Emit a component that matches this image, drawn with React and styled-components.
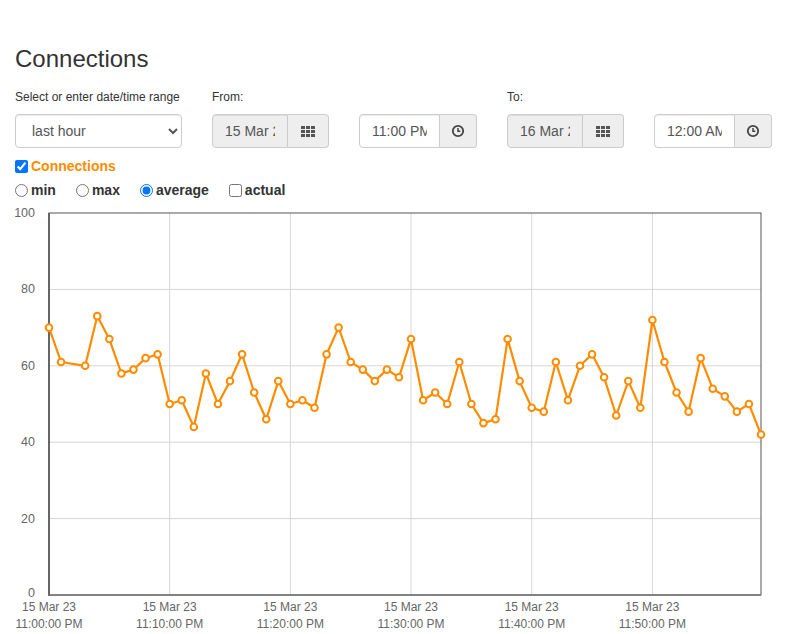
import React, { useState } from 'react'
import styled, { createGlobalStyle } from 'styled-components'

const GlobalStyle = createGlobalStyle`
  body {
    margin: 0;
    font-family: "Liberation Sans", Arial, sans-serif;
    font-size: 14px;
    color: #333;
    background: #fff;
  }
`

const ORANGE = '#ff8c00'

// minute offset from 11:00 PM -> average connections
const points = [
  [0, 70], [1, 61], [3, 60], [4, 73], [5, 67], [6, 58], [7, 59], [8, 62], [9, 63],
  [10, 50], [11, 51], [12, 44], [13, 58], [14, 50], [15, 56], [16, 63], [17, 53],
  [18, 46], [19, 56], [20, 50], [21, 51], [22, 49], [23, 63], [24, 70], [25, 61],
  [26, 59], [27, 56], [28, 59], [29, 57], [30, 67], [31, 51], [32, 53], [33, 50],
  [34, 61], [35, 50], [36, 45], [37, 46], [38, 67], [39, 56], [40, 49], [41, 48],
  [42, 61], [43, 51], [44, 60], [45, 63], [46, 57], [47, 47], [48, 56], [49, 49],
  [50, 72], [51, 61], [52, 53], [53, 48], [54, 62], [55, 54], [56, 52], [57, 48],
  [58, 50], [59, 42]
]

const Page = styled.div`
  padding: 0 15px;
`

const Title = styled.h2`
  margin: 0;
  padding-top: 45px;
  font-size: 24px;
  font-weight: 400;
  line-height: 28px;
  color: #333;
`

const Controls = styled.div`
  display: flex;
  gap: 30px;
  margin-top: 16px;
`

const Field = styled.div`
  display: flex;
  flex-direction: column;
  width: ${p => p.$w}px;
`

const Label = styled.label`
  font-size: 12px;
  line-height: 16px;
  height: 16px;
  margin-bottom: 9px;
  color: #333;
`

const Select = styled.select`
  height: 34px;
  width: 100%;
  padding: 6px 12px;
  font-family: inherit;
  font-size: 14px;
  color: #555;
  background: #fff;
  border: 1px solid #ccc;
  border-radius: 4px;
  box-shadow: inset 0 1px 1px rgba(0, 0, 0, 0.075);
`

const InputGroup = styled.div`
  display: flex;
  height: 34px;
  width: 100%;
`

const Input = styled.input`
  box-sizing: border-box;
  width: ${p => p.$w}px;
  height: 34px;
  padding: 6px 12px;
  font-family: inherit;
  font-size: 14px;
  color: #555;
  background: ${p => (p.readOnly ? '#eee' : '#fff')};
  border: 1px solid #ccc;
  border-radius: 4px 0 0 4px;
  box-shadow: inset 0 1px 1px rgba(0, 0, 0, 0.075);
  outline: none;
`

const Addon = styled.span`
  box-sizing: border-box;
  flex: 1;
  display: flex;
  align-items: center;
  justify-content: center;
  background: #eee;
  border: 1px solid #ccc;
  border-left: 0;
  border-radius: 0 4px 4px 0;
  color: #555;
`

const CheckRow = styled.div`
  display: flex;
  align-items: center;
  margin-top: 10px;
  height: 16px;
`

const SeriesLabel = styled.label`
  display: flex;
  align-items: center;
  font-weight: 700;
  font-size: 14px;
  color: ${p => p.$color || '#333'};
  margin-right: ${p => p.$mr || 0}px;
  input {
    margin: 0 3px 0 0;
    width: 13px;
    height: 13px;
  }
`

const ModeRow = styled.div`
  display: flex;
  align-items: center;
  margin-top: 7px;
  height: 18px;
`

const ChartBox = styled.div`
  margin: 1px -15px 0;
  height: 434px;
`

const CalendarIcon = () => (
  <svg width="14" height="11" viewBox="0 0 14 11">
    {[0, 1, 2].map(r =>
      [0, 1, 2].map(c => (
        <rect key={`${r}${c}`} x={c * 5} y={r * 4} width="4" height="3" fill="#555" />
      ))
    )}
  </svg>
)

const ClockIcon = () => (
  <svg width="14" height="14" viewBox="0 0 14 14">
    <circle cx="7" cy="7" r="5.2" fill="none" stroke="#444" strokeWidth="1.8" />
    <path d="M7 4v3.2h2.4" fill="none" stroke="#444" strokeWidth="1.5" />
  </svg>
)

function Chart() {
  const x0 = 49
  const x1 = 761
  const top = 13
  const bottom = 395
  const sx = m => x0 + (m * (x1 - x0)) / 59
  const sy = v => bottom - (v * (bottom - top)) / 100
  const line = points.map(([m, v]) => `${sx(m).toFixed(1)},${sy(v).toFixed(1)}`).join(' ')
  const yTicks = [0, 20, 40, 60, 80, 100]
  const xTicks = ['11:00:00 PM', '11:10:00 PM', '11:20:00 PM', '11:30:00 PM', '11:40:00 PM', '11:50:00 PM']

  return (
    <svg width="787" height="434" style={{ display: 'block' }} fontFamily="Liberation Sans, Arial, sans-serif">
      {yTicks.slice(1, 5).map(t => (
        <line key={t} x1={x0} x2={x1} y1={sy(t)} y2={sy(t)} stroke="#d6d6d6" strokeWidth="1" />
      ))}
      {xTicks.slice(1).map((t, i) => (
        <line key={t} x1={sx((i + 1) * 10)} x2={sx((i + 1) * 10)} y1={top} y2={bottom} stroke="#d6d6d6" strokeWidth="1" />
      ))}
      <rect x={x0} y={top} width={x1 - x0} height={bottom - top} fill="none" stroke="#555" strokeWidth="1" />
      <line x1={x0} x2={x0} y1={top} y2={bottom + 1} stroke="#555" strokeWidth="1.6" />
      <line x1={x0} x2={x1} y1={bottom} y2={bottom} stroke="#777" strokeWidth="1.6" />
      {yTicks.map(t => (
        <text key={t} x="35" y={sy(t) + 4 - (t === 0 ? 2 : 0)} fontSize="12.5" fill="#666" textAnchor="end">
          {t}
        </text>
      ))}
      {xTicks.map((t, i) => (
        <g key={t} fontSize="12" fill="#666" textAnchor="middle">
          <text x={sx(i * 10)} y="411">15 Mar 23</text>
          <text x={sx(i * 10)} y="428">{t}</text>
        </g>
      ))}
      <polyline points={line} fill="none" stroke={ORANGE} strokeWidth="2.2" strokeLinejoin="round" />
      {points.map(([m, v]) => (
        <circle key={m} cx={sx(m)} cy={sy(v)} r="3.3" fill="#fff" stroke={ORANGE} strokeWidth="2" />
      ))}
    </svg>
  )
}

export default function App() {
  const [mode, setMode] = useState('average')
  const [actual, setActual] = useState(false)
  const [show, setShow] = useState(true)

  return (
    <Page>
      <GlobalStyle />
      <Title>Connections</Title>
      <Controls>
        <Field $w={167}>
          <Label>Select or enter date/time range</Label>
          <Select defaultValue="hour">
            <option value="hour">last hour</option>
            <option value="day">last day</option>
          </Select>
        </Field>
        <Field $w={117}>
          <Label>From:</Label>
          <InputGroup>
            <Input $w={76} readOnly value="15 Mar 2023" />
            <Addon><CalendarIcon /></Addon>
          </InputGroup>
        </Field>
        <Field $w={118}>
          <Label>&nbsp;</Label>
          <InputGroup>
            <Input $w={81} defaultValue="11:00 PM" />
            <Addon><ClockIcon /></Addon>
          </InputGroup>
        </Field>
        <Field $w={117}>
          <Label>To:</Label>
          <InputGroup>
            <Input $w={76} readOnly value="16 Mar 2023" />
            <Addon><CalendarIcon /></Addon>
          </InputGroup>
        </Field>
        <Field $w={118}>
          <Label>&nbsp;</Label>
          <InputGroup>
            <Input $w={81} defaultValue="12:00 AM" />
            <Addon><ClockIcon /></Addon>
          </InputGroup>
        </Field>
      </Controls>
      <CheckRow>
        <SeriesLabel $color={ORANGE}>
          <input type="checkbox" checked={show} onChange={e => setShow(e.target.checked)} />
          Connections
        </SeriesLabel>
      </CheckRow>
      <ModeRow>
        {['min', 'max', 'average'].map(m => (
          <SeriesLabel key={m} $mr={20}>
            <input type="radio" name="mode" checked={mode === m} onChange={() => setMode(m)} />
            {m}
          </SeriesLabel>
        ))}
        <SeriesLabel>
          <input type="checkbox" checked={actual} onChange={e => setActual(e.target.checked)} />
          actual
        </SeriesLabel>
      </ModeRow>
      <ChartBox>{show && <Chart />}</ChartBox>
    </Page>
  )
}
